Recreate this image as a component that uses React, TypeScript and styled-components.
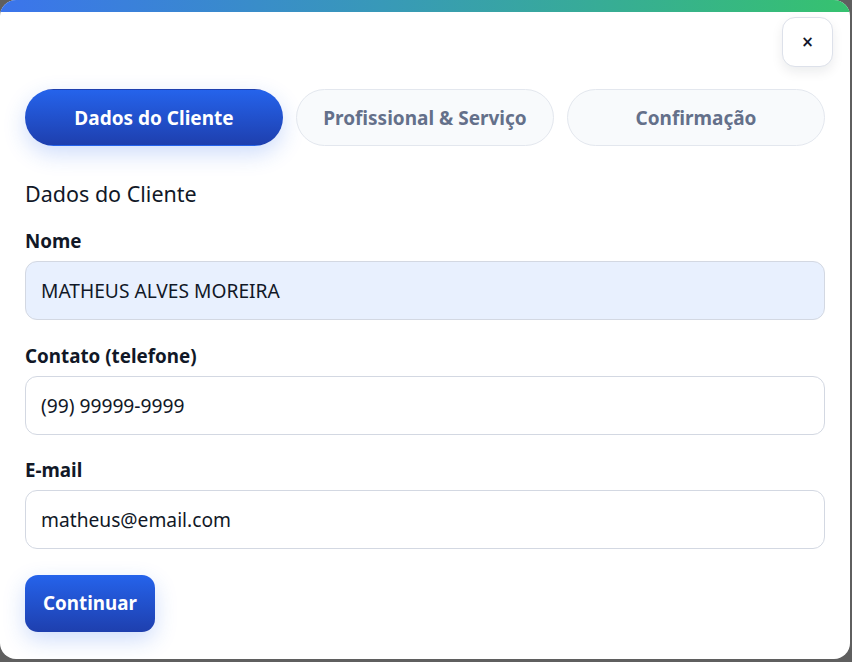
import styled, { createGlobalStyle } from "styled-components";
import { useState } from "react";

const GlobalStyle = createGlobalStyle`
  html, body {
    margin: 0;
    padding: 0;
    background: #5f5f5f;
    font-family: "Noto Sans", "Open Sans", sans-serif;
  }
  * { box-sizing: border-box; }
`;

const Modal = styled.div`
  width: 850px;
  height: 659px;
  background: #ffffff;
  border-radius: 16px;
  overflow: hidden;
  display: flex;
  flex-direction: column;
`;

const TopBar = styled.div`
  height: 12px;
  flex-shrink: 0;
  background: linear-gradient(90deg, #3b74ec 0%, #3899b8 45%, #36c26f 100%);
`;

const Content = styled.div`
  padding: 5px 25px 0 25px;
  display: flex;
  flex-direction: column;
`;

const CloseRow = styled.div`
  display: flex;
  justify-content: flex-end;
  margin-right: -8px;
`;

const CloseButton = styled.button`
  width: 51px;
  height: 50px;
  border-radius: 13px;
  border: 1px solid #dde1ea;
  background: #ffffff;
  box-shadow: 0 5px 12px rgba(15, 23, 42, 0.08);
  color: #0f172a;
  font-family: "DejaVu Sans", sans-serif;
  font-size: 15px;
  font-weight: 700;
  display: flex;
  align-items: center;
  justify-content: center;
  cursor: pointer;
`;

const Tabs = styled.div`
  display: grid;
  grid-template-columns: repeat(3, 1fr);
  gap: 13px;
  margin-top: 22px;
`;

const Tab = styled.button<{ $active?: boolean }>`
  height: 57px;
  padding-top: 2px;
  border-radius: 999px;
  font-family: inherit;
  font-size: 19px;
  font-weight: 700;
  cursor: pointer;
  border: 1px solid ${(p) => (p.$active ? "transparent" : "#e3e7ee")};
  background: ${(p) =>
    p.$active ? "linear-gradient(180deg, #2563eb 0%, #1e3fae 100%)" : "#f8fafc"};
  color: ${(p) => (p.$active ? "#ffffff" : "#64708a")};
  box-shadow: ${(p) => (p.$active ? "0 8px 22px rgba(37, 99, 235, 0.22)" : "none")};
`;

const SectionTitle = styled.h2`
  margin: 33px 0 20px;
  font-size: 21.5px;
  font-weight: 400;
  color: #111827;
  line-height: 30px;
`;

const Field = styled.div`
  display: flex;
  flex-direction: column;
  margin-bottom: 23.5px;
`;

const Label = styled.label`
  font-size: 18.8px;
  font-weight: 700;
  color: #111827;
  line-height: 25px;
  margin-bottom: 7px;
`;

const Input = styled.input<{ $filled?: boolean }>`
  height: 59px;
  width: 100%;
  border-radius: 12px;
  border: 1px solid #d3d8e2;
  background: ${(p) => (p.$filled ? "#e8f0fe" : "#ffffff")};
  padding: 0 15px;
  font-family: inherit;
  font-size: 19.2px;
  color: #111827;
  outline: none;
`;

const SubmitButton = styled.button`
  align-self: flex-start;
  height: 57px;
  margin-top: 2px;
  padding: 0 18px;
  border: none;
  border-radius: 13px;
  background: linear-gradient(180deg, #2563eb 0%, #1e3fae 100%);
  color: #ffffff;
  font-family: inherit;
  font-size: 18.8px;
  font-weight: 700;
  box-shadow: 0 8px 22px rgba(37, 99, 235, 0.22);
  cursor: pointer;
`;

const steps = ["Dados do Cliente", "Profissional & Serviço", "Confirmação"];

export default function App() {
  const [step, setStep] = useState(0);
  const [nome, setNome] = useState("MATHEUS ALVES MOREIRA");
  const [fone, setFone] = useState("(99) 99999-9999");
  const [email, setEmail] = useState("matheus@email.com");

  return (
    <>
      <GlobalStyle />
      <Modal>
        <TopBar />
        <Content>
          <CloseRow>
            <CloseButton aria-label="Fechar">×</CloseButton>
          </CloseRow>

          <Tabs>
            {steps.map((s, i) => (
              <Tab key={s} $active={i === step} onClick={() => setStep(i)}>
                {s}
              </Tab>
            ))}
          </Tabs>

          <SectionTitle>Dados do Cliente</SectionTitle>

          <Field>
            <Label>Nome</Label>
            <Input $filled value={nome} onChange={(e) => setNome(e.target.value)} />
          </Field>
          <Field>
            <Label>Contato (telefone)</Label>
            <Input value={fone} onChange={(e) => setFone(e.target.value)} />
          </Field>
          <Field>
            <Label>E-mail</Label>
            <Input value={email} onChange={(e) => setEmail(e.target.value)} />
          </Field>

          <SubmitButton>Continuar</SubmitButton>
        </Content>
      </Modal>
    </>
  );
}
